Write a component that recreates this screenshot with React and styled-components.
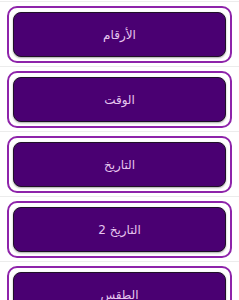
import React from "react";
import styled, { createGlobalStyle } from "styled-components";

const GlobalStyle = createGlobalStyle`
  html, body {
    margin: 0;
    padding: 0;
    background: #ffffff;
    overflow: hidden;
  }
`;

const items = ["الأرقام", "الوقت", "التاريخ", "التاريخ 2", "الطقس", "الترجمة"];

const App = () => {
  return (
    <>
      <GlobalStyle />
      <List>
        {items.map((label) => (
          <Row key={label}>
            <Card>
              <MenuButton dir="rtl">{label}</MenuButton>
            </Card>
          </Row>
        ))}
      </List>
    </>
  );
};

export default App;

const List = styled.div`
  display: flex;
  flex-direction: column;
  padding-top: 1px;
`;

const Row = styled.div`
  border-top: 1px solid #ececec;
  padding: 4px 7px 3px 7px;
`;

const Card = styled.div`
  box-sizing: border-box;
  height: 57px;
  border: 2px solid #8e24aa;
  border-radius: 10px;
  background: #ffffff;
  padding: 4px;
  display: flex;
`;

const MenuButton = styled.button`
  flex: 1;
  box-sizing: border-box;
  height: 45px;
  margin: 0;
  background: #4a0072;
  border: 1px solid #1f1027;
  border-radius: 8px;
  box-shadow: 0 1px 2px rgba(0, 0, 0, 0.35);
  color: #e6c6ee;
  font-family: "DejaVu Sans", "Noto Sans", sans-serif;
  font-size: 12px;
  display: flex;
  align-items: center;
  justify-content: center;
  cursor: pointer;
`;
